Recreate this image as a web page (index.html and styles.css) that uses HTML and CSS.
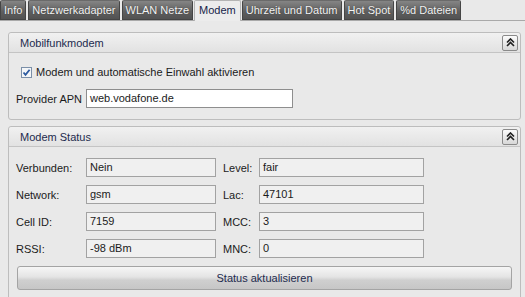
FILE: index.html
```html
<!DOCTYPE html>
<html lang="de">
<head>
<meta charset="UTF-8"/>
<link rel="stylesheet" href="styles.css">
</head>
<body>
<div class="tabs">
  <div class="tab">Info</div>
  <div class="tab">Netzwerkadapter</div>
  <div class="tab">WLAN Netze</div>
  <div class="tab active">Modem</div>
  <div class="tab">Uhrzeit und Datum</div>
  <div class="tab">Hot Spot</div>
  <div class="tab">%d Dateien</div>
</div>

<div class="content">
  <div class="panel">
    <div class="panel-head">
      <span>Mobilfunkmodem</span>
      <div class="collapse"><svg width="9" height="9" viewBox="0 0 9 9"><path d="M1 4.5 L4.5 1 L8 4.5 M1 8 L4.5 4.5 L8 8" fill="none" stroke="#202020" stroke-width="1.6"/></svg></div>
    </div>
    <div class="panel-body">
      <div class="check-row">
        <span class="checkbox"><svg width="11" height="11" viewBox="0 0 11 11"><rect x="0.5" y="0.5" width="10" height="10" fill="#f4f6f8" stroke="#7b8fa8"/><path d="M2.5 5.5 L4.5 7.8 L8.6 2.8" fill="none" stroke="#2c5aa0" stroke-width="1.8"/></svg></span>
        <span>Modem und automatische Einwahl aktivieren</span>
      </div>
      <div class="apn-row">
        <span class="label">Provider APN</span>
        <div class="field apn">web.vodafone.de</div>
      </div>
    </div>
  </div>

  <div class="panel">
    <div class="panel-head">
      <span>Modem Status</span>
      <div class="collapse"><svg width="9" height="9" viewBox="0 0 9 9"><path d="M1 4.5 L4.5 1 L8 4.5 M1 8 L4.5 4.5 L8 8" fill="none" stroke="#202020" stroke-width="1.6"/></svg></div>
    </div>
    <div class="panel-body status">
      <div class="grid">
        <span class="label">Verbunden:</span><div class="field ro">Nein</div>
        <span class="label right">Level:</span><div class="field ro">fair</div>
        <span class="label">Network:</span><div class="field ro">gsm</div>
        <span class="label right">Lac:</span><div class="field ro">47101</div>
        <span class="label">Cell ID:</span><div class="field ro">7159</div>
        <span class="label right">MCC:</span><div class="field ro">3</div>
        <span class="label">RSSI:</span><div class="field ro">-98 dBm</div>
        <span class="label right">MNC:</span><div class="field ro">0</div>
      </div>
      <div class="button">Status aktualisieren</div>
    </div>
  </div>
</div>
</body>
</html>
```

FILE: styles.css
```css
body {
	margin:0;
	background:#e9e9e9;
	font-family:"Liberation Sans", Arial, sans-serif;
	font-size:11px;
	color:#1b1b1b;
	overflow:hidden;
}

.tabs {
	display:flex;
	height:20px;
	border-bottom:1px solid #a9a9a9;
	gap:2px;
}

.tab {
	height:20px;
	line-height:19px;
	padding:0 3px;
	box-sizing:border-box;
	background:linear-gradient(#858585, #5e5e5e 60%, #525252);
	border:1px solid #454545;
	border-top-color:#6a6a6a;
	border-radius:2px 2px 0 0;
	color:#f4f4f4;
	text-shadow:0 0 1px #333;
	white-space:nowrap;
}

.tab.active {
	height:21px;
	background:#ececec;
	border:1px solid #b4b4b4;
	border-bottom:none;
	color:#16244a;
	text-shadow:none;
	margin:0 -1px;
	padding:0 4px;
}

.content {
	padding:11px 4px 0 8px;
}

.panel {
	border:1px solid #bdbdbd;
	border-radius:3px;
	margin-bottom:6px;
}

.panel-head {
	height:19px;
	display:flex;
	align-items:center;
	justify-content:space-between;
	padding:0 2px 0 11px;
	background:linear-gradient(#f1f1f1, #e2e2e2);
	border-bottom:1px solid #c4c4c4;
	border-radius:3px 3px 0 0;
	color:#1d2b4e;
}

.collapse {
	width:14px;
	height:14px;
	border:1px solid #8a8a8a;
	border-radius:2px;
	background:linear-gradient(#fbfbfb, #d8d8d8);
	display:flex;
	align-items:center;
	justify-content:center;
}

.panel-body {
	padding:11px 7px 11px 7px;
}

.check-row {
	height:16px;
	display:flex;
	align-items:center;
	gap:4px;
	padding-left:5px;
}

.checkbox svg {
	display:block;
}

.apn-row {
	display:flex;
	align-items:center;
	margin-top:9px;
}

.label {
	width:70px;
	flex-shrink:0;
	white-space:nowrap;
}

.field {
	height:19px;
	line-height:17px;
	box-sizing:border-box;
	padding:0 3px;
	border:1px solid #8e8e8e;
}

.field.apn {
	width:207px;
	background:#fff;
}

.field.ro {
	background:#f0f0f0;
	border-color:#a2a2a2;
}

.grid {
	display:grid;
	grid-template-columns:70px 130px 43px 165px;
	row-gap:8px;
	align-items:center;
}

.label.right {
	padding-left:7px;
	width:auto;
}

.button {
	margin:8px 0 0 1px;
	width:495px;
	height:24px;
	box-sizing:border-box;
	border:1px solid #a4a4a4;
	border-radius:3px;
	background:linear-gradient(#f6f6f6, #e4e4e4 45%, #cfcfcf 60%, #c6c6c6);
	text-align:center;
	line-height:22px;
	color:#1d2b4e;
}
```
